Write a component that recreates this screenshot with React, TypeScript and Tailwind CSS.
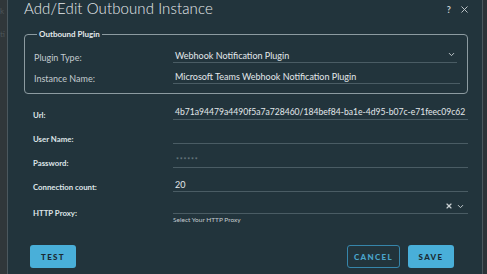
import { ChevronDown, X } from "lucide-react";

const fontStack = { fontFamily: "Lato, 'Open Sans', sans-serif" };

const lineStyle = "border-b border-[#4a5c64]";
const valueStyle = "text-[9px] text-[#e3e8eb] pl-[2px] leading-[11px] whitespace-nowrap";
const urlStyle = "text-[8.6px] text-[#e3e8eb] pl-[2px] leading-[11px] whitespace-nowrap";
const boldLabel = "text-[7.8px] font-bold text-[#dfe5e8] leading-[8px]";
const groupLabel = "w-[139px] text-[9px] text-[#c3cbcf] leading-[9px] pb-[1px]";

const FieldRow = ({
  label,
  children,
}: {
  label: string;
  children?: React.ReactNode;
}) => {
  return (
    <div className="flex items-end h-[21px] mt-[3px]">
      <div className={`w-[140px] pb-[1px] ${boldLabel}`}>{label}</div>
      <div className={`flex-1 h-[21px] flex items-end pb-[1px] ${lineStyle}`}>
        {children}
      </div>
    </div>
  );
};

const App = () => {
  return (
    <div
      className="w-[487px] h-[274px] flex bg-[#30373a] overflow-hidden"
      style={fontStack}
    >
      {/* page behind the modal */}
      <div className="w-[7px] flex flex-col text-[8px] leading-[8px] text-[#4c5559]">
        <div className="mt-[7px]">k</div>
        <div className="mt-[15px]">ti</div>
      </div>

      {/* modal */}
      <div className="w-[476px] bg-[#22343c] border-x border-[#4b585e] flex flex-col pl-[16px] pr-[14px]">
        {/* header */}
        <div className="flex items-start h-[17px]">
          <h1 className="text-[15px] font-light text-[#e6eaec] leading-[17px] tracking-[0.1px]">
            Add/Edit Outbound Instance
          </h1>
          <div className="ml-auto flex items-center gap-[8px] mt-[4px] mr-[-2px] text-[#c9d0d3]">
            <span className="text-[9px] font-bold leading-[10px]">?</span>
            <X size={11} strokeWidth={2} />
          </div>
        </div>

        {/* outbound plugin group */}
        <fieldset className="mt-[12px] border border-[#8d9ba1] rounded-[4px] pl-[9px] pr-[7px] pt-[3px] pb-[9px]">
          <legend className="ml-[3px] px-[2px] text-[8px] font-bold text-[#e3e8eb] leading-[10px]">
            Outbound Plugin
          </legend>
          <div className="flex items-end h-[21px]">
            <div className={groupLabel}>Plugin Type:</div>
            <div className={`flex-1 h-[21px] flex items-end pb-[1px] mr-[3px] ${lineStyle}`}>
              <span className={valueStyle}>Webhook Notification Plugin</span>
              <ChevronDown
                size={9}
                strokeWidth={2.5}
                className="ml-auto mr-[1px] mb-[2px] text-[#c9d0d3]"
              />
            </div>
          </div>
          <div className="flex items-end h-[21px]">
            <div className={groupLabel}>Instance Name:</div>
            <div className={`flex-1 h-[21px] flex items-end pb-[1px] ${lineStyle}`}>
              <span className={valueStyle}>
                Microsoft Teams Webhook Notification Plugin
              </span>
            </div>
          </div>
        </fieldset>

        {/* connection fields */}
        <div className="pl-[9px] flex flex-col mt-[2px]">
          <FieldRow label="Url:">
            <span className={urlStyle}>
              4b71a94479a4490f5a7a728460/184bef84-ba1e-4d95-b07c-e71feec09c62
            </span>
          </FieldRow>
          <FieldRow label="User Name:" />
          <FieldRow label="Password:">
            <span className="text-[7px] text-[#74838a] pl-[3px] tracking-[0.8px] leading-[11px]">
              ******
            </span>
          </FieldRow>
          <FieldRow label="Connection count:">
            <span className={valueStyle}>20</span>
          </FieldRow>

          <div className="flex mt-[5px]">
            <div className={`w-[140px] pt-[12px] ${boldLabel}`}>HTTP Proxy:</div>
            <div className="flex-1 flex flex-col">
              <div className={`h-[17px] flex items-end justify-end gap-[3px] pr-[3px] pb-[2px] ${lineStyle}`}>
                <X size={8} strokeWidth={3.5} className="text-[#c9d0d3] mb-[1px]" />
                <ChevronDown size={9} strokeWidth={2.5} className="text-[#c9d0d3]" />
              </div>
              <div className="text-[6.5px] text-[#c3cbcf] leading-[8px] mt-[2px]">
                Select Your HTTP Proxy
              </div>
            </div>
          </div>
        </div>

        {/* footer */}
        <div className="flex items-center mt-[21px] pl-[6px] pr-[14px]">
          <button className="w-[46px] h-[23px] rounded-[3px] bg-[#49afd9] text-[#1b2b33] text-[8px] font-black tracking-[1.3px]">
            TEST
          </button>
          <button className="ml-auto w-[53px] h-[23px] rounded-[3px] border border-[#3685aa] text-[#4aa5cd] text-[8px] font-black tracking-[1.3px]">
            CANCEL
          </button>
          <button className="ml-[8px] w-[46px] h-[23px] rounded-[3px] bg-[#49afd9] text-[#1b2b33] text-[8px] font-black tracking-[1.3px]">
            SAVE
          </button>
        </div>
      </div>

      <div className="flex-1 bg-[#2b3338]" />
    </div>
  );
};

export default App;
